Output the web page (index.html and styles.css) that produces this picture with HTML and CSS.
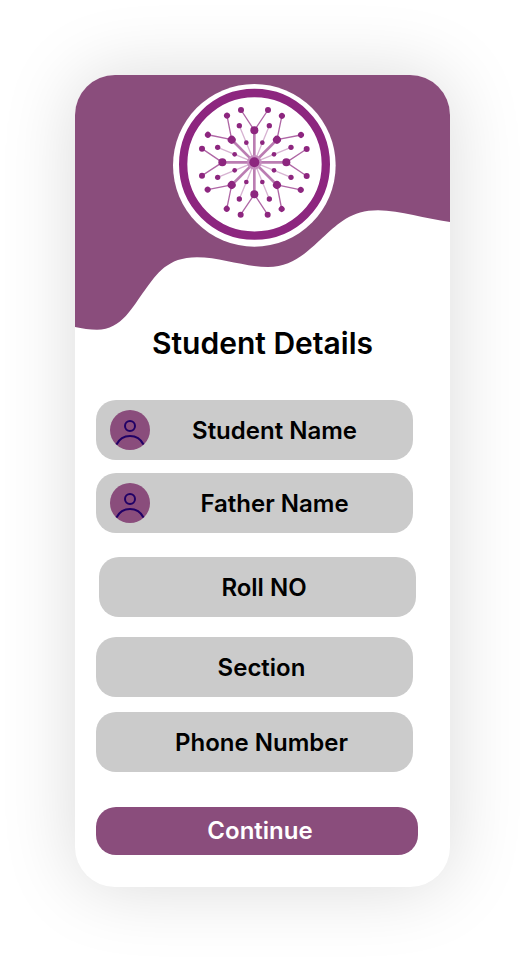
FILE: index.html
```html
<!DOCTYPE html>
<html lang="en">
<head>
<meta charset="utf-8">
<meta name="viewport" content="width=device-width, initial-scale=1">
<title>Student Details</title>
<link rel="stylesheet" href="styles.css">
</head>
<body>
<main class="card">
  <header class="hero">
    <svg class="wave" viewBox="0 0 375 255" preserveAspectRatio="none" aria-hidden="true">
      <path d="M0 0H375V147C350 144 326 135.300 303 135.300C276 135.300 263 149 250 160.500C237 171.500 221 192 193 192C169 192 146 182.300 122 182.300C92 182.300 82 199 70 215C58 231 47 254.800 22 254.800C15 254.800 7 253.500 0 252Z"/>
    </svg>
    <svg class="logo" viewBox="24 27 489 489" role="img" aria-label="School emblem">
      <defs>
        <g id="main-branch">
          <path class="twig" d="M268 166L228 105M268 166L309 105"/>
          <path class="stem" d="M268 262V166"/>
          <circle cx="268" cy="166" r="12"/>
          <circle cx="228" cy="105" r="9"/>
          <circle cx="309" cy="105" r="9"/>
        </g>
        <g id="side-branch">
          <path class="thread" d="M268 262L244 203L223 152"/>
          <circle cx="244" cy="203" r="7"/>
          <circle cx="223" cy="152" r="8"/>
        </g>
      </defs>
      <circle class="disc" cx="268" cy="271" r="244"/>
      <circle class="ring" cx="268.500" cy="268" r="214"/>
      <g class="tree">
        <use href="#side-branch"/>
        <use href="#side-branch" transform="rotate(90 268 262)"/>
        <use href="#side-branch" transform="rotate(180 268 262)"/>
        <use href="#side-branch" transform="rotate(270 268 262)"/>
        <use href="#side-branch" transform="translate(536 0) scale(-1 1)"/>
        <use href="#side-branch" transform="rotate(90 268 262) translate(536 0) scale(-1 1)"/>
        <use href="#side-branch" transform="rotate(180 268 262) translate(536 0) scale(-1 1)"/>
        <use href="#side-branch" transform="rotate(270 268 262) translate(536 0) scale(-1 1)"/>
        <use href="#main-branch"/>
        <use href="#main-branch" transform="rotate(45 268 262)"/>
        <use href="#main-branch" transform="rotate(90 268 262)"/>
        <use href="#main-branch" transform="rotate(135 268 262)"/>
        <use href="#main-branch" transform="rotate(180 268 262)"/>
        <use href="#main-branch" transform="rotate(225 268 262)"/>
        <use href="#main-branch" transform="rotate(270 268 262)"/>
        <use href="#main-branch" transform="rotate(315 268 262)"/>
        <circle class="halo" cx="268" cy="262" r="22"/>
        <circle cx="268" cy="262" r="15"/>
      </g>
    </svg>
  </header>
  <h1 class="title">Student Details</h1>
  <form class="form">
    <div class="names">
      <label class="field field-icon">
        <svg class="avatar" viewBox="0 0 40 40" aria-hidden="true">
          <circle class="avatar-bg" cx="20" cy="20" r="20"/>
          <circle class="avatar-line" cx="20" cy="16" r="5"/>
          <path class="avatar-line" d="M6.500 34.500C9 29.500 14 26 20 26S31 29.500 33.500 34.500"/>
        </svg>
        <input class="input" type="text" placeholder="Student Name" aria-label="Student Name">
      </label>
      <label class="field field-icon">
        <svg class="avatar" viewBox="0 0 40 40" aria-hidden="true">
          <circle class="avatar-bg" cx="20" cy="20" r="20"/>
          <circle class="avatar-line" cx="20" cy="16" r="5"/>
          <path class="avatar-line" d="M6.500 34.500C9 29.500 14 26 20 26S31 29.500 33.500 34.500"/>
        </svg>
        <input class="input" type="text" placeholder="Father Name" aria-label="Father Name">
      </label>
    </div>
    <label class="field field-roll">
      <input class="input" type="text" placeholder="Roll NO" aria-label="Roll NO">
    </label>
    <div class="contact">
      <label class="field">
        <input class="input" type="text" placeholder="Section" aria-label="Section">
      </label>
      <label class="field">
        <input class="input" type="tel" placeholder="Phone Number" aria-label="Phone Number">
      </label>
    </div>
    <button class="continue" type="submit">Continue</button>
  </form>
</main>
</body>
</html>
```
FILE: styles.css
```css
* {
  box-sizing: border-box;
}

body {
  margin: 0;
  padding: 75px;
  background: #fff;
  color: #000;
  font-family: Inter, "Liberation Sans", sans-serif;
}

.card {
  overflow: hidden;
  padding-bottom: 32px;
  border-radius: 40px;
  background: #fff;
  box-shadow: 0 0 75px rgba(0, 0, 0, 0.15);
}

.hero {
  position: relative;
  display: flex;
  justify-content: center;
  min-height: 248px;
  padding: 9px 16px 0 0;
}

.wave {
  position: absolute;
  top: 0;
  left: 0;
  width: 100%;
  height: 255px;
  fill: #8a4d7c;
}

.logo {
  position: relative;
  width: 163px;
  height: 163px;
}

.disc {
  fill: #fff;
}

.ring {
  fill: none;
  stroke: #8d267f;
  stroke-width: 25;
}

.tree {
  fill: #8d267f;
  stroke: none;
}

.stem,
.twig,
.thread {
  fill: none;
  stroke: #8d267f;
}

.stem {
  stroke-width: 8;
  stroke-opacity: 0.6;
}

.twig {
  stroke-width: 4;
  stroke-opacity: 0.7;
}

.thread {
  stroke-width: 4;
  stroke-opacity: 0.35;
}

.halo {
  fill: #c68fbf;
}

.title {
  position: relative;
  margin: 0;
  font-size: 30px;
  font-weight: 600;
  line-height: 40px;
  text-align: center;
}

.form {
  display: flex;
  flex-direction: column;
  padding: 37px 32px 0 21px;
}

.names,
.contact {
  display: flex;
  flex-direction: column;
}

.names {
  gap: 13px;
}

.contact {
  gap: 15px;
}

.field {
  display: flex;
  align-items: center;
  width: calc(100% - 5px);
  height: 60px;
  padding-left: 14px;
  border-radius: 20px;
  background: #cbcbcb;
}

.field-roll {
  align-self: center;
  margin: 24px 0 20px;
}

.avatar {
  flex: none;
  width: 40px;
  height: 40px;
}

.avatar-bg {
  fill: #8a4d7c;
}

.avatar-line {
  fill: none;
  stroke: #200066;
  stroke-width: 2;
}

.input {
  flex: 1;
  min-width: 0;
  height: 100%;
  padding: 0;
  border: 0;
  outline: 0;
  background: none;
  color: #000;
  font: 600 24px/32px Inter, "Liberation Sans", sans-serif;
  text-align: center;
}

.field-icon .input {
  padding-right: 14px;
}

.input::placeholder {
  color: #000;
  opacity: 1;
}

.continue {
  height: 48px;
  margin-top: 35px;
  padding: 0 0 0 6px;
  border: 0;
  border-radius: 20px;
  background: #8a4d7c;
  color: #fff;
  font: 600 24px/32px Inter, "Liberation Sans", sans-serif;
  text-align: center;
}
```
